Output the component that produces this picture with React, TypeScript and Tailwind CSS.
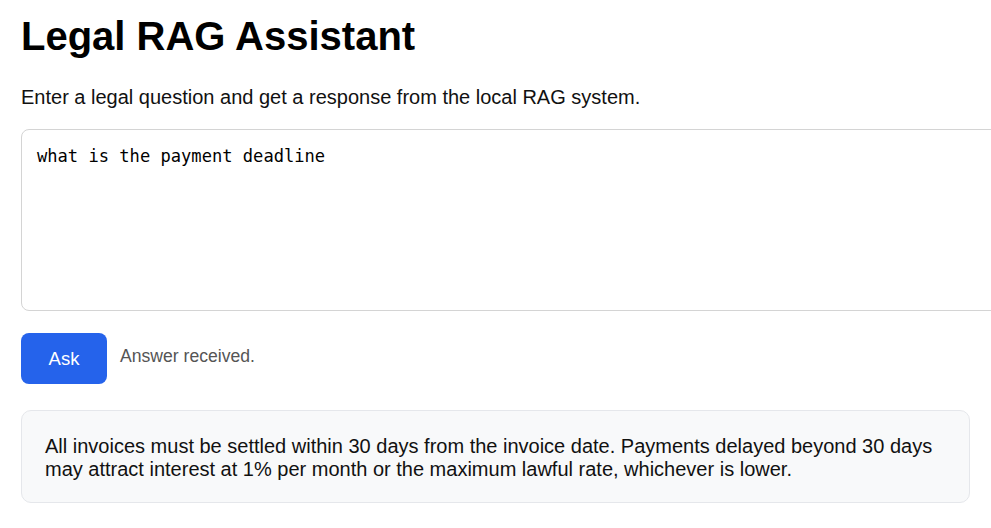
import React from "react";

export default function App() {
  return (
    <div className="min-h-screen bg-white text-black overflow-hidden" style={{ fontFamily: '"Liberation Sans", Arial, sans-serif' }}>
      <div className="px-[21px] pt-[13px]">
        <h1 className="text-[40px] leading-[46px] font-bold m-0">Legal RAG Assistant</h1>
        <p className="mt-[27px] text-[20px] leading-[23px] text-[#111]">
          Enter a legal question and get a response from the local RAG system.
        </p>
        <textarea
          className="mt-[20px] block w-[1010px] h-[182px] rounded-[8px] border border-[#d4d4d4] px-[15px] py-[15px] text-[17.1px] leading-[22px] text-black resize-none outline-none"
          style={{ fontFamily: '"DejaVu Sans Mono", "Liberation Mono", monospace' }}
          defaultValue="what is the payment deadline"
        />
        <div className="mt-[22px] flex items-center gap-[13px]">
          <button className="w-[86px] h-[51px] rounded-[8px] bg-[#2563eb] text-white text-[18.5px]">Ask</button>
          <span className="text-[17.6px] text-[#555] -mt-[5px]">Answer received.</span>
        </div>
        <div className="mt-[26px] rounded-[10px] border border-[#e5e7eb] bg-[#f8f9fa] px-[23px] pt-[24px] pb-[21px] text-[20px] leading-[23px] text-[#111]">
          All invoices must be settled within 30 days from the invoice date. Payments delayed beyond 30 days may attract interest at 1% per month or the maximum lawful rate, whichever is lower.
        </div>
      </div>
    </div>
  );
}
